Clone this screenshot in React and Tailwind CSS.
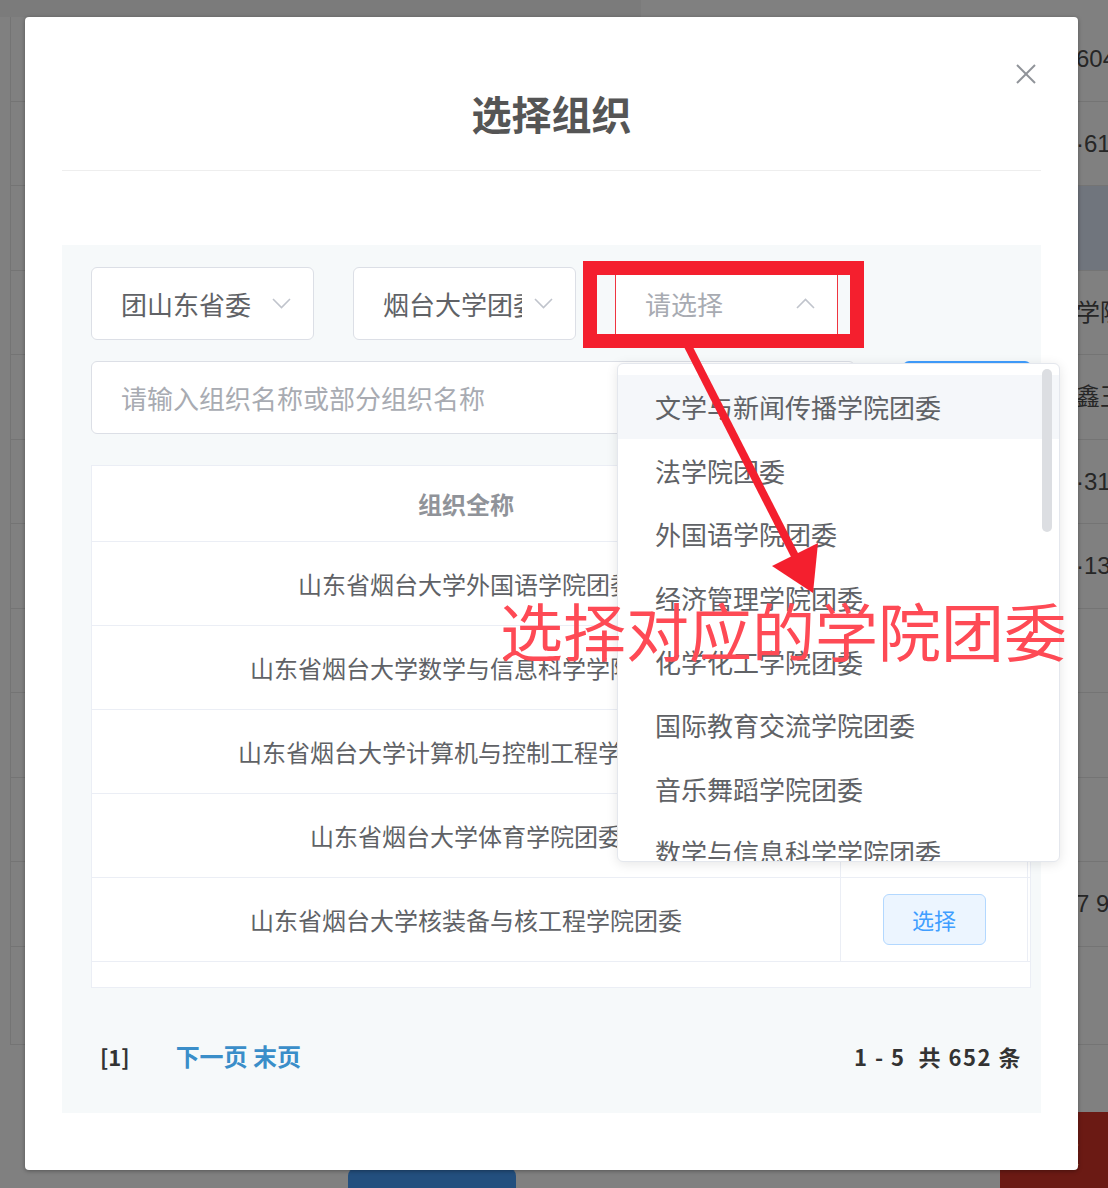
import React from 'react';

const rows = [
  '山东省烟台大学外国语学院团委',
  '山东省烟台大学数学与信息科学学院团委',
  '山东省烟台大学计算机与控制工程学院团委',
  '山东省烟台大学体育学院团委',
  '山东省烟台大学核装备与核工程学院团委',
];

const options = [
  '文学与新闻传播学院团委',
  '法学院团委',
  '外国语学院团委',
  '经济管理学院团委',
  '化学化工学院团委',
  '国际教育交流学院团委',
  '音乐舞蹈学院团委',
  '数学与信息科学学院团委',
];

const bgRows = [
  { h: 'h-[85px]', text: '604' },
  { h: 'h-[84px]', text: '·61' },
  { h: 'h-[85px]', text: '', band: true },
  { h: 'h-[84px]', text: '学院' },
  { h: 'h-[85px]', text: '鑫玉' },
  { h: 'h-[84px]', text: '·31' },
  { h: 'h-[85px]', text: '·13' },
  { h: 'h-[84px]', text: '' },
  { h: 'h-[85px]', text: '' },
  { h: 'h-[84px]', text: '' },
  { h: 'h-[85px]', text: '7 9' },
  { h: 'h-[98px]', text: '' },
];

function Chevron({ up }) {
  return (
    <svg width="19" height="11" viewBox="0 0 19 11" className="shrink-0">
      <polyline
        points={up ? '1,10 9.5,1.5 18,10' : '1,1 9.5,9.5 18,1'}
        fill="none"
        stroke="#c0c4cc"
        strokeWidth="1.6"
      />
    </svg>
  );
}

function Select({ value, placeholder, open, className }) {
  return (
    <div className={`shrink-0 flex items-center w-[223px] h-[73px] bg-white border rounded-[6px] pl-[29px] pr-[22px] ${className || 'border-[#dcdfe6]'}`}>
      <div className={`w-[139px] overflow-hidden whitespace-nowrap text-[26px] ${value ? 'text-[#606266]' : 'text-[#a8abb2]'}`}>
        {value || placeholder}
      </div>
      <div className="flex-1" />
      <Chevron up={open} />
    </div>
  );
}

function Background() {
  return (
    <div className="w-[1108px] h-[1188px] bg-[#808080] text-[#262626] text-[24px] font-['Liberation_Sans','Noto_Sans_CJK_SC',sans-serif]">
      <div className="flex h-[17px]">
        <div className="w-[641px] bg-[#7b7b7b]" />
        <div className="flex-1" />
      </div>
      <div className="ml-[10px] border-l border-[#747474]">
        {bgRows.map((r, i) => (
          <div key={i} className={`flex ${r.h} border-b border-[#747474]`}>
            <div className="flex-1" />
            <div className={`w-[32px] flex items-center whitespace-nowrap overflow-hidden ${r.band ? 'bg-[#70757d]' : ''}`}>
              {r.text}
            </div>
          </div>
        ))}
      </div>
      <div className="flex items-start">
        <div className="w-[348px]" />
        <div className="mt-[123px] w-[168px] h-[30px] rounded-[8px] bg-[#234f7e]" />
        <div className="flex-1" />
        <div className="mt-[67px] w-[108px] h-[90px] rounded-tl-[8px] bg-[#6b1a14] text-[#a08784] text-[28px] pt-[22px] pl-[24px] whitespace-nowrap overflow-hidden">
          提交
        </div>
      </div>
    </div>
  );
}

function Modal() {
  return (
    <div className="absolute left-[25px] top-[17px] w-[1053px] h-[1153px] bg-white rounded-[4px] shadow-[0_1px_4px_rgba(0,0,0,0.35)]">
      <svg width="20" height="20" viewBox="0 0 20 20" className="absolute right-[42px] top-[47px]">
        <line x1="1" y1="1" x2="19" y2="19" stroke="#909399" strokeWidth="2" />
        <line x1="19" y1="1" x2="1" y2="19" stroke="#909399" strokeWidth="2" />
      </svg>
      <div className="h-[153px] pt-[74px] text-center text-[40px] leading-[44px] font-bold text-[#555555]">
        选择组织
      </div>
      <div className="mx-[37px] border-b border-[#eeeeee]" />
      <div className="mx-[37px] mt-[74px] h-[868px] bg-[#f6f9fa] pl-[29px] pr-[10px] pt-[22px]">
        <div className="flex gap-[39px]">
          <Select value="团山东省委" />
          <Select value="烟台大学团委" />
          <Select placeholder="请选择" open className="border-[#ef3540]" />
        </div>
        <div className="flex gap-[48px] mt-[21px]">
          <div className="shrink-0 w-[764px] h-[73px] bg-white border border-[#dcdfe6] rounded-[6px] pl-[29px] flex items-center text-[26px] text-[#a8abb2]">
            请输入组织名称或部分组织名称
          </div>
          <div className="shrink-0 w-[128px] h-[73px] bg-[#409eff] rounded-[6px] flex items-center justify-center text-white text-[24px]">
            查询
          </div>
        </div>
        <div className="mt-[31px] w-[940px] h-[523px] bg-white border border-[#ebeef5]">
          <div className="flex h-[76px] border-b border-[#ebeef5]">
            <div className="w-[749px] border-r border-[#ebeef5] flex items-center justify-center text-[24px] font-bold text-[#909399]">
              组织全称
            </div>
            <div className="w-[187px] border-r border-[#ebeef5] flex items-center justify-center text-[24px] font-bold text-[#909399]">
              操作
            </div>
          </div>
          {rows.map((name) => (
            <div key={name} className="flex h-[84px] border-b border-[#ebeef5]">
              <div className="w-[749px] border-r border-[#ebeef5] flex items-center justify-center text-[24px] text-[#606266]">
                {name}
              </div>
              <div className="w-[187px] border-r border-[#ebeef5] flex items-center justify-center">
                <div className="w-[103px] h-[51px] rounded-[6px] bg-[#ecf5ff] border border-[#b3d8ff] flex items-center justify-center text-[22px] text-[#409eff]">
                  选择
                </div>
              </div>
            </div>
          ))}
        </div>
        <div className="mt-[48px] w-[940px] h-[40px] flex items-center px-[9px] font-bold">
          <span className="text-[22px] text-[#333333]">[1]</span>
          <span className="ml-[46px] text-[24px] text-[#3a8ec9]">下一页 末页</span>
          <div className="flex-1" />
          <span className="text-[22px] text-[#333333] whitespace-pre tracking-[1.5px]">1 - 5  共 652 条</span>
        </div>
      </div>
    </div>
  );
}

function Dropdown() {
  return (
    <div className="absolute left-[617px] top-[363px] w-[443px] h-[499px] bg-white border border-[#e4e7ed] rounded-[6px] shadow-[0_2px_12px_rgba(0,0,0,0.1)] overflow-hidden">
      <div className="pt-[11px]">
        {options.map((o, i) => (
          <div
            key={o}
            className={`h-[63.6px] flex items-center pl-[37px] text-[26px] text-[#606266] whitespace-nowrap ${i === 0 ? 'bg-[#f5f7fa]' : ''}`}
          >
            {o}
          </div>
        ))}
      </div>
      <div className="absolute right-[7px] top-[5px] w-[10px] h-[163px] rounded-full bg-[#dcdee2]" />
    </div>
  );
}

function Annotations() {
  return (
    <>
      <div className="absolute left-[583px] top-[261px] w-[281px] h-[87px] border-[14px] border-[#f41f2e]" />
      <svg width="1108" height="1188" className="absolute left-0 top-0 pointer-events-none">
        <line x1="688" y1="346" x2="795" y2="556" stroke="#f41f2e" strokeWidth="8" />
        <polygon points="813,593 772,566 818,543" fill="#f41f2e" />
      </svg>
      <div className="absolute left-[500px] top-[597px] text-[63px] leading-none text-[#fe4a55] whitespace-nowrap">
        选择对应的学院团委
      </div>
    </>
  );
}

export default function App() {
  return (
    <div className="relative w-[1108px] h-[1188px] overflow-hidden font-['Noto_Sans_CJK_SC','Noto_Sans',sans-serif]">
      <Background />
      <Modal />
      <Dropdown />
      <Annotations />
    </div>
  );
}
